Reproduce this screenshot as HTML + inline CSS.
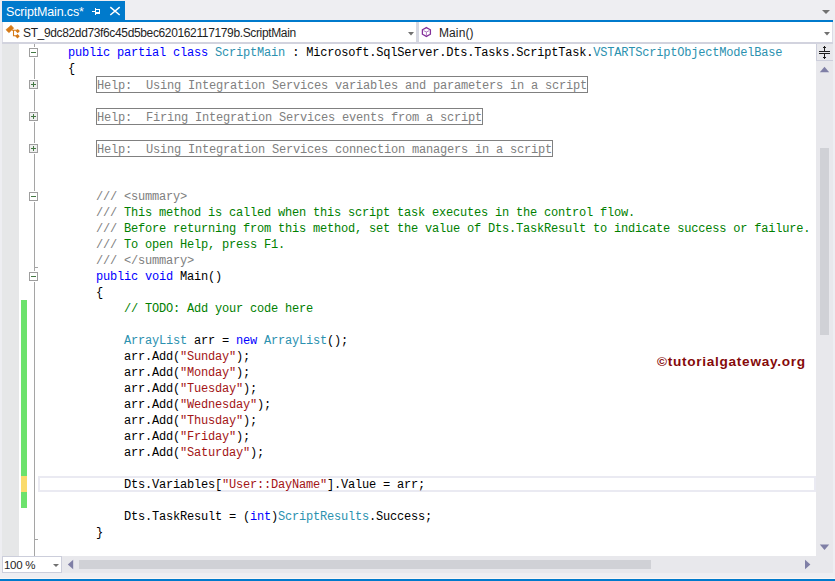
<!DOCTYPE html>
<html><head><meta charset="utf-8">
<style>
*{margin:0;padding:0;box-sizing:border-box}
html,body{width:835px;height:581px;overflow:hidden;background:#EEEEF2;position:relative}
.a{position:absolute}
.ui{font-family:"Liberation Sans",sans-serif;font-size:11.5px;color:#1E1E1E;white-space:pre}
.code{font-family:"Liberation Mono",monospace;font-size:12px;letter-spacing:-0.2px;line-height:16px;white-space:pre;color:#000}
.ln{position:absolute;left:40px;height:16px;margin-top:1px}
.k{color:#0000FF}
.t{color:#2B91AF}
.c{color:#008000}
.g{color:#808080}
.s{color:#A31515}
.help{color:#808080;border:1px solid #808080;display:inline-block;height:17px;line-height:12px;padding-top:3px;vertical-align:top;position:relative;top:-1px}
</style></head><body>
<!-- tab bar -->
<div class="a" style="left:2px;top:1px;width:123px;height:20px;background:#007ACC"></div>
<div class="a" style="left:2px;top:20px;width:831px;height:2px;background:#007ACC"></div>
<div class="a ui" style="left:6px;top:5px;color:#fff;font-size:12.5px;letter-spacing:-0.15px">ScriptMain.cs*</div>
<!-- pin -->
<div class="a" style="left:92px;top:11px;width:3px;height:1px;background:#fff"></div>
<div class="a" style="left:95px;top:8px;width:1px;height:7px;background:#fff"></div>
<div class="a" style="left:95px;top:9px;width:5px;height:5px;border:1px solid #fff;border-bottom-width:2px"></div>
<!-- close X -->
<svg class="a" style="left:0;top:0" width="130" height="20" viewBox="0 0 130 20"><path d="M110.3 7.2L119.7 15M119.7 7.2L110.3 15" stroke="#fff" stroke-width="1.5" fill="none"/></svg>
<!-- tab bar dropdown arrow right -->
<svg class="a" style="left:822px;top:9px" width="9" height="6"><path d="M0 1H8L4 5Z" fill="#717171"/></svg>

<!-- nav bar -->
<div class="a" style="left:2px;top:22px;width:414px;height:20px;background:#fff;border-left:1px solid #DCDCE6"></div>
<div class="a" style="left:419px;top:22px;width:414px;height:20px;background:#fff;border-right:1px solid #DCDCE6"></div>
<div class="a" style="left:416px;top:22px;width:3px;height:20px;background:#D6D8E2"></div>
<div class="a" style="left:2px;top:42px;width:831px;height:2px;background:#D2D3DE"></div>
<!-- left icon -->
<svg class="a" style="left:0;top:0" width="30" height="42" viewBox="0 0 30 42">
<path d="M11.1 25.3L13.7 28.2L8.9 32.7L6 29.7Z" fill="#D57A18" stroke="#D57A18" stroke-width="0.6" stroke-linejoin="round"/>
<path d="M12 30.3H17M13.5 30V35.8H17" stroke="#D57A18" stroke-width="1.1" fill="none"/>
<path d="M17.7 28.9L19.9 31.1L17.7 33.3L15.5 31.1Z" fill="#D57A18"/>
<path d="M17.5 34L19.7 36.2L17.5 38.4L15.3 36.2Z" fill="#D57A18"/>
</svg>
<div class="a ui" style="left:23px;top:26px;font-size:12px;letter-spacing:-0.36px;color:#1E1E1E">ST_9dc82dd73f6c45d5bec620162117179b.ScriptMain</div>
<svg class="a" style="left:408px;top:32px" width="6" height="4"><path d="M0 0H6L3 3.5Z" fill="#717171"/></svg>
<!-- method icon -->
<svg class="a" style="left:0;top:0" width="440" height="42" viewBox="0 0 440 42"><path d="M426.4 27.6L430.4 29.8V34.2L426.4 36.4L422.4 34.2V29.8Z" stroke="#83309A" stroke-width="1.3" fill="none"/><path d="M426.4 31.8V36 M423.5 30.6L426.4 32 L429.3 30.6" stroke="#B07CC0" stroke-width="1" fill="none"/></svg>
<div class="a ui" style="left:439px;top:26px;font-size:12px;letter-spacing:0.1px;color:#1E1E1E">Main()</div>
<svg class="a" style="left:824px;top:32px" width="6" height="4"><path d="M0 0H6L3 3.5Z" fill="#717171"/></svg>

<!-- editor -->
<div class="a" style="left:2px;top:44px;width:814px;height:512px;background:#fff"></div>
<div class="a" style="left:2px;top:44px;width:17px;height:512px;background:#E6E7E8"></div>
<!-- change markers -->
<div class="a" style="left:21px;top:300px;width:6px;height:176px;background:#6CE26C"></div>
<div class="a" style="left:21px;top:476px;width:6px;height:16px;background:#FADB6C"></div>
<div class="a" style="left:21px;top:492px;width:6px;height:16px;background:#6CE26C"></div>

<!-- outline -->
<div class="a" style="left:34px;top:44px;width:1px;height:3px;background:#A5A5A5"></div>
<div class="a" style="left:29px;top:48px;width:9px;height:9px;border:1px solid #9E9E9E;background:#fff"></div>
<div class="a" style="left:31px;top:52px;width:5px;height:1px;background:#437843"></div>
<div class="a" style="left:34px;top:58px;width:1px;height:21px;background:#A5A5A5"></div>
<div class="a" style="left:29px;top:80px;width:9px;height:9px;border:1px solid #9E9E9E;background:#EFEFEF"></div>
<div class="a" style="left:31px;top:84px;width:5px;height:1px;background:#437843"></div>
<div class="a" style="left:33px;top:82px;width:1px;height:5px;background:#437843"></div>
<div class="a" style="left:34px;top:90px;width:1px;height:21px;background:#A5A5A5"></div>
<div class="a" style="left:29px;top:112px;width:9px;height:9px;border:1px solid #9E9E9E;background:#EFEFEF"></div>
<div class="a" style="left:31px;top:116px;width:5px;height:1px;background:#437843"></div>
<div class="a" style="left:33px;top:114px;width:1px;height:5px;background:#437843"></div>
<div class="a" style="left:34px;top:122px;width:1px;height:21px;background:#A5A5A5"></div>
<div class="a" style="left:29px;top:144px;width:9px;height:9px;border:1px solid #9E9E9E;background:#EFEFEF"></div>
<div class="a" style="left:31px;top:148px;width:5px;height:1px;background:#437843"></div>
<div class="a" style="left:33px;top:146px;width:1px;height:5px;background:#437843"></div>
<div class="a" style="left:34px;top:154px;width:1px;height:37px;background:#A5A5A5"></div>
<div class="a" style="left:29px;top:192px;width:9px;height:9px;border:1px solid #9E9E9E;background:#fff"></div>
<div class="a" style="left:31px;top:196px;width:5px;height:1px;background:#437843"></div>
<div class="a" style="left:34px;top:202px;width:1px;height:69px;background:#A5A5A5"></div>
<div class="a" style="left:29px;top:272px;width:9px;height:9px;border:1px solid #9E9E9E;background:#fff"></div>
<div class="a" style="left:31px;top:276px;width:5px;height:1px;background:#437843"></div>
<div class="a" style="left:34px;top:282px;width:1px;height:275px;background:#A5A5A5"></div>
<div class="a" style="left:34px;top:267px;width:4px;height:1px;background:#A5A5A5"></div>
<div class="a" style="left:34px;top:539px;width:4px;height:1px;background:#A5A5A5"></div>

<!-- current line highlight -->
<div class="a" style="left:38px;top:476px;width:778px;height:16px;border:2px solid #EAEAF2"></div>

<div class="code a" style="left:0;top:0;width:817px;height:557px">
<div class="ln" style="top:44px">    <span class="k">public</span> <span class="k">partial</span> <span class="k">class</span> <span class="t">ScriptMain</span> : Microsoft.SqlServer.Dts.Tasks.ScriptTask.<span class="t">VSTARTScriptObjectModelBase</span></div>
<div class="ln" style="top:60px">    {</div>
<div class="ln" style="top:76px">        <span class="help">Help:  Using Integration Services variables and parameters in a script</span></div>
<div class="ln" style="top:108px">        <span class="help">Help:  Firing Integration Services events from a script</span></div>
<div class="ln" style="top:140px">        <span class="help">Help:  Using Integration Services connection managers in a script</span></div>
<div class="ln" style="top:188px">        <span class="g">/// &lt;summary&gt;</span></div>
<div class="ln" style="top:204px">        <span class="g">///</span><span class="c"> This method is called when this script task executes in the control flow.</span></div>
<div class="ln" style="top:220px">        <span class="g">///</span><span class="c"> Before returning from this method, set the value of Dts.TaskResult to indicate success or failure.</span></div>
<div class="ln" style="top:236px">        <span class="g">///</span><span class="c"> To open Help, press F1.</span></div>
<div class="ln" style="top:252px">        <span class="g">/// &lt;/summary&gt;</span></div>
<div class="ln" style="top:268px">        <span class="k">public</span> <span class="k">void</span> Main()</div>
<div class="ln" style="top:284px">        {</div>
<div class="ln" style="top:300px">            <span class="c">// TODO: Add your code here</span></div>
<div class="ln" style="top:332px">            <span class="t">ArrayList</span> arr = <span class="k">new</span> <span class="t">ArrayList</span>();</div>
<div class="ln" style="top:348px">            arr.Add(<span class="s">"Sunday"</span>);</div>
<div class="ln" style="top:364px">            arr.Add(<span class="s">"Monday"</span>);</div>
<div class="ln" style="top:380px">            arr.Add(<span class="s">"Tuesday"</span>);</div>
<div class="ln" style="top:396px">            arr.Add(<span class="s">"Wednesday"</span>);</div>
<div class="ln" style="top:412px">            arr.Add(<span class="s">"Thusday"</span>);</div>
<div class="ln" style="top:428px">            arr.Add(<span class="s">"Friday"</span>);</div>
<div class="ln" style="top:444px">            arr.Add(<span class="s">"Saturday"</span>);</div>
<div class="ln" style="top:476px">            Dts.Variables[<span class="s">"User::DayName"</span>].Value = arr;</div>
<div class="ln" style="top:508px">            Dts.TaskResult = (<span class="k">int</span>)<span class="t">ScriptResults</span>.Success;</div>
<div class="ln" style="top:524px">        }</div>
</div>

<!-- watermark -->
<div class="a" style="left:657px;top:354px;font-family:'Liberation Sans',sans-serif;font-weight:bold;font-size:13.6px;letter-spacing:0.72px;color:#850A0A;white-space:pre">©tutorialgateway.org</div>

<!-- vertical scrollbar -->
<div class="a" style="left:816px;top:44px;width:17px;height:512px;background:#E8E8EC"></div>
<div class="a" style="left:833px;top:22px;width:2px;height:556px;background:#EEEEF2"></div>
<div class="a" style="left:816px;top:44px;width:17px;height:17px;border-left:1px solid #CCCEDB;border-bottom:1px solid #CCCEDB;background:#E8E8EC"></div>
<div class="a" style="left:819px;top:51px;width:11px;height:1px;background:#1E1E1E"></div>
<div class="a" style="left:819px;top:53px;width:11px;height:1px;background:#1E1E1E"></div>
<div class="a" style="left:824px;top:46px;width:1px;height:5px;background:#1E1E1E"></div>
<div class="a" style="left:824px;top:54px;width:1px;height:5px;background:#1E1E1E"></div>
<div class="a" style="left:823px;top:47px;width:3px;height:1px;background:#1E1E1E"></div>
<div class="a" style="left:823px;top:57px;width:3px;height:1px;background:#1E1E1E"></div>

<div class="a" style="left:820px;top:148px;width:9px;height:187px;background:#D0D1D6"></div>


<!-- bottom bar -->
<div class="a" style="left:0;top:556px;width:833px;height:17px;background:#E8E8EC"></div>
<div class="a" style="left:0;top:573px;width:835px;height:5px;background:#EEEEF2"></div>
<div class="a" style="left:0;top:44px;width:2px;height:534px;background:#EEEEF2"></div>
<div class="a" style="left:2px;top:556px;width:60px;height:17px;background:#fff;border:1px solid #CCCEDB"></div>
<div class="a ui" style="left:4px;top:559px;font-size:11.5px;letter-spacing:-0.3px">100 %</div>
<svg class="a" style="left:53px;top:564px" width="7" height="4"><path d="M0 0H6L3 3Z" fill="#717171"/></svg>

<div class="a" style="left:79px;top:560px;width:572px;height:9px;background:#D0D1D6"></div>

<div class="a" style="left:0;top:578px;width:835px;height:1px;background:#FBF6F4"></div>
<div class="a" style="left:0;top:579px;width:835px;height:2px;background:#007ACC"></div>
<svg class="a" style="left:0;top:0" width="835" height="581" viewBox="0 0 835 581"><path d="M819.8 72.2L824.5 66.8L829.2 72.2Z" fill="#7F7FA6"/><path d="M819.8 544.6L824.5 550L829.2 544.6Z" fill="#7F7FA6"/><path d="M73.2 559.8L67.8 564.5L73.2 569.2Z" fill="#7F7FA6"/><path d="M805 559.8L810.4 564.5L805 569.2Z" fill="#7F7FA6"/></svg>
</body></html>
